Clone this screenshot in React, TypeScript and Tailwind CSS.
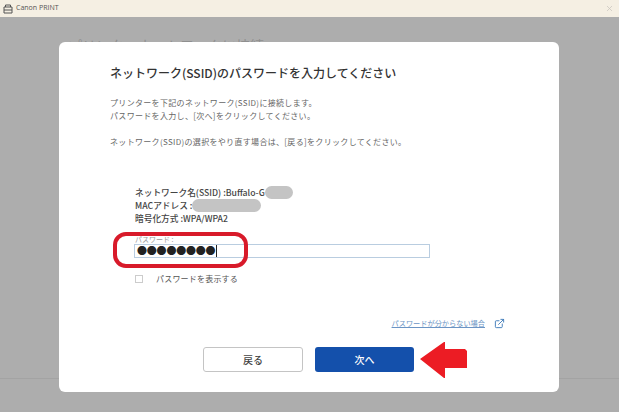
import { X, ExternalLink } from 'lucide-react';

const jp = { fontFamily: '"Noto Sans CJK JP", "Open Sans", sans-serif' };

export default function App() {
  return (
    <div className="relative w-[619px] h-[412px] overflow-hidden bg-[#adadad]" style={jp}>
      {/* Title bar */}
      <div className="flex items-center h-[17px] bg-[#f5efe3] px-[3px] text-[#555]">
        <svg width="10" height="10" viewBox="0 0 10 10" fill="none" stroke="#555" strokeWidth="1">
          <path d="M2.5 3V1h5v2M1 3h8v6H1zM1 6h8" />
        </svg>
        <span className="ml-[3px] text-[7px]" style={{ fontFamily: '"Open Sans", sans-serif' }}>Canon PRINT</span>
        <X className="ml-auto mr-[2px] text-[#c9c6bf]" size={9} />
      </div>

      {/* Page behind the dialog */}
      <div className="pl-[68px] pt-[18px] text-[14px] leading-[20px] text-[#8f8f8f]">プリンターネットワークに接続</div>
      <div className="absolute left-0 right-0 top-[378px] h-px bg-[#a3a3a3]" />

      {/* Dialog */}
      <div className="absolute left-[59px] top-[42px] w-[500px] h-[350px] rounded-[6px] bg-white pl-[51px] pr-[54px] pt-[21px] text-[#444]">
        <h1 className="text-[12px] leading-[20px] font-medium text-[#333]">ネットワーク(SSID)のパスワードを入力してください</h1>
        <div className="mt-[13px] text-[8px] tracking-[0.32px] leading-[13px] text-[#666]">
          <p>プリンターを下記のネットワーク(SSID)に接続します。</p>
          <p>パスワードを入力し、[次へ]をクリックしてください。</p>
          <p className="mt-[13px]">ネットワーク(SSID)の選択をやり直す場合は、[戻る]をクリックしてください。</p>
        </div>

        <div className="mt-[38px] ml-[25px] text-[8.7px] leading-[13px] font-medium text-[#444]">
          <p className="flex items-center">ネットワーク名(SSID) :Buffalo-G<span className="w-[28px] h-[13px] rounded-full bg-[#c4c4c4]" /></p>
          <p className="flex items-center">MACアドレス :<span className="w-[69px] h-[13px] rounded-full bg-[#c4c4c4]" /></p>
          <p>暗号化方式 :WPA/WPA2</p>
        </div>

        <div className="mt-[9px] ml-[25px] text-[7px] leading-[10px] text-[#999]">パスワード :</div>
        <div className="flex items-center ml-[24px] w-[296px] h-[14px] border border-[#b9cde0] text-[#222]">
          <span className="pl-[2px] pr-[1px] text-[10px] tracking-[-0.2px] border-r border-[#222] leading-[12px]">●●●●●●●●</span>
        </div>

        <label className="flex items-center mt-[14px] ml-[25px] text-[8px] tracking-[0.2px] leading-[14px] text-[#555]">
          <span className="w-[8px] h-[8px] border border-[#ccc]" />
          <span className="ml-[13px]">パスワードを表示する</span>
        </label>

        <div className="flex items-center justify-end mt-[31px] text-[#6b94c4]">
          <a className="text-[7.2px] leading-[12px] underline">パスワードが分からない場合</a>
          <ExternalLink className="ml-[9px] text-[#3b78b8]" size={11} />
        </div>

        <div className="flex gap-[12px] mt-[18px] ml-[93px] text-[10px] font-medium">
          <button className="w-[100px] h-[25px] rounded-[3px] border border-[#c4c4c4] text-[#444] bg-white">戻る</button>
          <button className="w-[99px] h-[25px] rounded-[3px] bg-[#1450ab] text-white">次へ</button>
        </div>
      </div>

      {/* Red annotations */}
      <div className="absolute left-[113px] top-[232px] w-[135px] h-[36px] rounded-[13px] border-[4px] border-[#d81a2a]" />
      <svg className="absolute left-[420px] top-[342px]" width="47" height="36" viewBox="0 0 47 36">
        <path d="M0 17 L24 0 L25 0 L25 7 L45 7 L47 9 L47 26 L25 26 L25 36 L24 36 Z" fill="#ec1c24" />
      </svg>
    </div>
  );
}
